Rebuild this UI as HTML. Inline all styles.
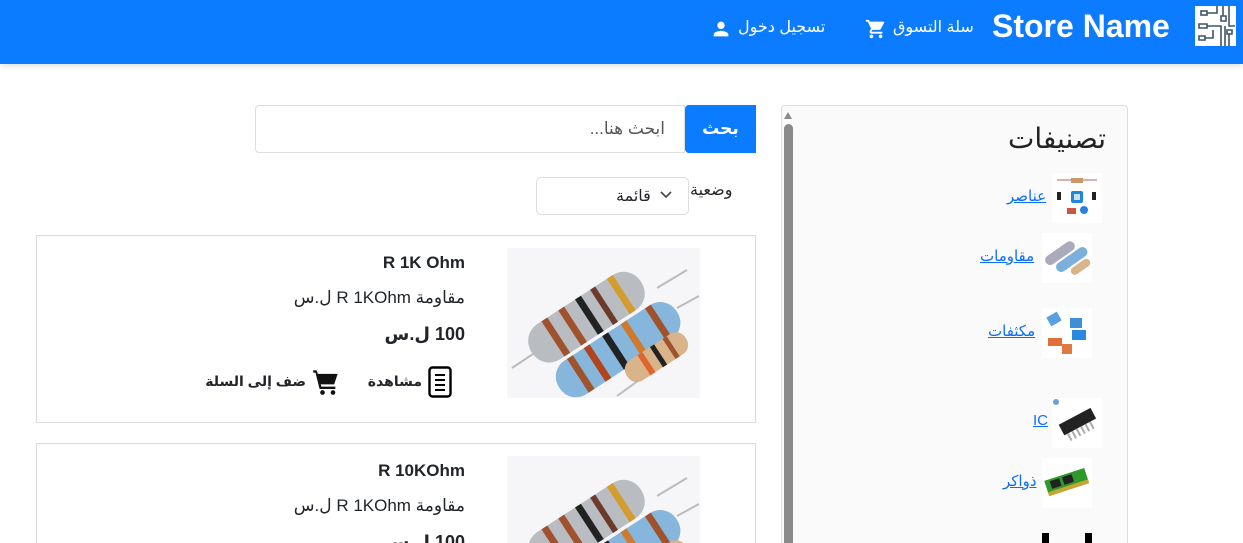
<!DOCTYPE html>
<html><head><meta charset="utf-8">
<style>
*{box-sizing:border-box;margin:0;padding:0}
html,body{width:1243px;height:543px;overflow:hidden}
body{background:#fff;font-family:"Liberation Sans","DejaVu Sans",sans-serif;position:relative;color:#212529}
.nav{position:absolute;left:0;top:0;width:1243px;height:64px;background:#0b7bff;box-shadow:0 2px 6px rgba(0,0,0,.12)}
.abs{position:absolute}
.brand{left:992px;top:8px;font-size:32px;font-weight:bold;color:#fff}
.navt{color:#fff;font-size:16px;top:17px}
.side{left:781px;top:105px;width:347px;height:438px;background:#fafafa;border:1px solid #ddd;border-bottom:none;border-radius:4px 4px 0 0}
.sb{left:784px;top:124px;width:9px;height:419px;background:#8a8a8a;border-radius:5px 5px 0 0}
.cat a{color:#0b6efd;text-decoration:underline;font-size:15px}
.thumb{position:absolute;width:50px;height:50px;background:#fff}
.card{position:absolute;left:36px;width:720px;height:188px;border:1px solid #dcdcdc;background:#fff}
.r{text-align:right;direction:rtl;position:absolute;white-space:nowrap}
</style></head><body>
<div class="nav"></div>
<div class="abs" style="left:1195px;top:6px;width:41px;height:40px;background:#fff">
<svg width="41" height="40" viewBox="0 0 41 40" fill="none" stroke="#3d5566" stroke-width="1.6"><rect x="6" y="5" width="6" height="4"/><path d="M12 7h10V0M28 0v10M26 10h5v5h-5zM34 0v20h6M4 18h8v4H4zM12 20h14v20M4 30h6v4H4zM10 32h8v-8M30 20v20M34 28v12M32 24h5v4h-5z"/></svg></div>
<div class="abs brand">Store Name</div>
<div class="abs navt" style="left:893px">سلة التسوق</div>
<svg class="abs" style="left:865px;top:18px" width="22" height="22" viewBox="0 0 24 24"><path fill="#fff" d="M7 18c-1.1 0-2 .9-2 2s.9 2 2 2 2-.9 2-2-.9-2-2-2zM1 2v2h2l3.6 7.6-1.4 2.4c-.1.3-.2.6-.2 1 0 1.1.9 2 2 2h12v-2H7.4c-.1 0-.2-.1-.2-.2v-.1l.9-1.7h7.4c.8 0 1.4-.4 1.7-1l3.6-6.5c.1-.2.2-.3.2-.5 0-.6-.4-1-1-1H5.2l-.9-2H1zm16 16c-1.1 0-2 .9-2 2s.9 2 2 2 2-.9 2-2-.9-2-2-2z"/></svg>
<div class="abs navt" style="left:738px">تسجيل دخول</div>
<svg class="abs" style="left:710px;top:18px" width="22" height="22" viewBox="0 0 24 24"><path fill="#fff" d="M12 12c2.2 0 4-1.8 4-4s-1.8-4-4-4-4 1.8-4 4 1.8 4 4 4zm0 2c-2.7 0-8 1.3-8 4v2h16v-2c0-2.7-5.3-4-8-4z"/></svg>

<div class="abs side"></div>
<div class="abs" style="left:784px;top:112px;width:0;height:0;border-left:4px solid transparent;border-right:4px solid transparent;border-bottom:7px solid #8a8a8a"></div>
<div class="abs sb"></div>
<div class="abs" style="left:1008px;top:122px;font-size:28px;color:#222">تصنيفات</div>
<div class="cat">
<div class="thumb" style="left:1052px;top:173px"><svg width="50" height="50"><path d="M5 7h40" stroke="#a66" /><rect x="19" y="5" width="12" height="5" fill="#c96"/><rect x="19" y="18" width="12" height="12" rx="2" fill="#1e88d8"/><rect x="22" y="21" width="6" height="6" fill="#cde"/><rect x="5" y="19" width="4" height="8" fill="#222"/><rect x="40" y="19" width="4" height="8" fill="#222"/><rect x="15" y="35" width="9" height="6" fill="#c54"/><circle cx="32" cy="37" r="4" fill="#2a7de1"/></svg></div>
<a class="abs" style="left:1007px;top:187px">عناصر</a>
<div class="thumb" style="left:1042px;top:233px"><svg width="50" height="50"><g transform="rotate(-35 25 25)"><rect x="5" y="12" width="34" height="10" rx="5" fill="#aab"/><rect x="10" y="24" width="36" height="10" rx="5" fill="#7ab0db"/><rect x="20" y="36" width="22" height="8" rx="4" fill="#d8b58a"/></g></svg></div>
<a class="abs" style="left:980px;top:247px">مقاومات</a>
<div class="thumb" style="left:1042px;top:308px"><svg width="50" height="50"><rect x="6" y="6" width="12" height="10" fill="#5aa0e0" transform="rotate(-30 12 11)"/><rect x="28" y="10" width="12" height="10" fill="#3f8fd8"/><rect x="30" y="22" width="14" height="10" fill="#2a88e0"/><rect x="6" y="30" width="14" height="8" fill="#e0703a"/><rect x="20" y="36" width="10" height="10" fill="#e07a40"/></svg></div>
<a class="abs" style="left:988px;top:322px">مكثفات</a>
<div class="thumb" style="left:1052px;top:398px"><svg width="50" height="50"><g transform="rotate(-28 25 25)"><rect x="8" y="18" width="36" height="12" fill="#222"/><path d="M12 30v8M17 30v8M22 30v8M27 30v8M32 30v8M37 30v8" stroke="#aaa" stroke-width="2"/></g><circle cx="4" cy="4" r="3" fill="#6aa0d8"/></svg></div>
<a class="abs" style="left:1033px;top:412px">IC</a>
<div class="thumb" style="left:1042px;top:458px"><svg width="50" height="50"><g transform="rotate(-18 25 25)"><rect x="4" y="16" width="42" height="16" fill="#2f9a2a"/><rect x="9" y="18" width="10" height="8" fill="#222"/><rect x="22" y="18" width="10" height="8" fill="#222"/><rect x="4" y="28" width="42" height="4" fill="#c9a632"/></g></svg></div>
<a class="abs" style="left:1003px;top:472px">ذواكر</a>
<div class="abs" style="left:1042px;top:533px;width:7px;height:10px;background:#000"></div>
<div class="abs" style="left:1085px;top:533px;width:7px;height:10px;background:#000"></div>
</div>

<div class="abs" style="left:255px;top:105px;width:430px;height:48px;border:1px solid #ddd;border-radius:4px 0 0 4px"></div>
<div class="r" style="right:578px;top:119px;font-size:17px;color:#555">ابحث هنا...</div>
<div class="abs" style="left:685px;top:105px;width:71px;height:48px;background:#0b7bff;border-radius:4px 0 0 4px;color:#fff;font-weight:bold;font-size:17px;text-align:center;line-height:48px">بحث</div>
<div class="abs" style="left:690px;top:180px;font-size:16px">وضعية</div>
<div class="abs" style="left:536px;top:177px;width:153px;height:38px;border:1px solid #ddd;border-radius:5px"></div>
<div class="abs" style="left:616px;top:186px;font-size:16px">قائمة</div>
<svg class="abs" style="left:660px;top:190px" width="12" height="10"><path d="M1 2l5 5 5-5" stroke="#444" stroke-width="1.6" fill="none"/></svg>

<svg width="0" height="0" style="position:absolute"><defs><g id="res">
<rect width="193" height="150" fill="#f6f6f8"/>
<path d="M5 120l30-20M60 145l30-22M110 148l25-18M150 40l30-18M170 60l22-12" stroke="#bbb" stroke-width="2"/>
<g transform="rotate(-33 80 70)"><rect x="15" y="48" width="130" height="42" rx="20" fill="#b9bcc0"/><rect x="40" y="48" width="7" height="42" fill="#a0522d"/><rect x="60" y="48" width="7" height="42" fill="#a0522d"/><rect x="80" y="48" width="7" height="42" fill="#222"/><rect x="98" y="48" width="6" height="42" fill="#6b3a2a"/><rect x="118" y="48" width="7" height="42" fill="#d49b2d"/></g>
<g transform="rotate(-33 110 100)"><rect x="40" y="82" width="140" height="40" rx="19" fill="#86b6dc"/><rect x="62" y="82" width="7" height="40" fill="#a0522d"/><rect x="82" y="82" width="7" height="40" fill="#b0451d"/><rect x="104" y="82" width="7" height="40" fill="#222"/><rect x="126" y="82" width="7" height="40" fill="#d07a2d"/><rect x="155" y="82" width="7" height="40" fill="#a0522d"/></g>
<g transform="rotate(-33 150 110)"><rect x="115" y="97" width="70" height="24" rx="11" fill="#d9b48a"/><rect x="135" y="97" width="6" height="24" fill="#e0662d"/><rect x="150" y="97" width="5" height="24" fill="#222"/><rect x="165" y="97" width="5" height="24" fill="#a0522d"/></g>
</g></defs></svg>

<div class="card" style="top:235px"></div>
<svg class="abs" style="left:507px;top:248px" width="193" height="150"><use href="#res"/></svg>
<div class="r" style="top:253px;font-weight:bold;font-size:17px;right:778px">R 1K Ohm</div>
<div class="r" style="top:288px;font-size:17px;right:778px">مقاومة R 1KOhm ل.س</div>
<div class="r" style="top:324px;font-weight:bold;font-size:18px;right:778px">100 ل.س</div>
<div class="r" style="right:821px;top:373px;font-size:14px;font-weight:bold">مشاهدة</div>
<svg class="abs" style="left:428px;top:366px" width="24" height="32" viewBox="0 0 24 32"><rect x="1.5" y="1.5" width="21" height="29" rx="3" fill="none" stroke="#000" stroke-width="2.4"/><path d="M7 9h10M7 14h10M7 19h10M7 24h10" stroke="#000" stroke-width="2"/></svg>
<div class="r" style="right:937px;top:373px;font-size:14px;font-weight:bold">ضف إلى السلة</div>
<svg class="abs" style="left:312px;top:368px" width="28" height="28" viewBox="0 0 24 24"><path fill="#111" d="M1 2h3l1 3h17l-3 9H7.5L8 16h12v2H6.5L3 4H1z"/><circle cx="9" cy="21" r="2" fill="#111"/><circle cx="18" cy="21" r="2" fill="#111"/></svg>

<div class="card" style="top:443px;height:100px;border-bottom:none"></div>
<svg class="abs" style="left:507px;top:456px" width="193" height="87" viewBox="0 0 193 87"><use href="#res"/></svg>
<div class="r" style="top:461px;font-weight:bold;font-size:17px;right:778px">R 10KOhm</div>
<div class="r" style="top:496px;font-size:17px;right:778px">مقاومة R 1KOhm ل.س</div>
<div class="abs" style="left:380px;top:530px;width:90px;height:13px;overflow:hidden"><div class="r" style="top:2px;right:5px;font-weight:bold;font-size:18px">100 ل.س</div></div>
</body></html>
